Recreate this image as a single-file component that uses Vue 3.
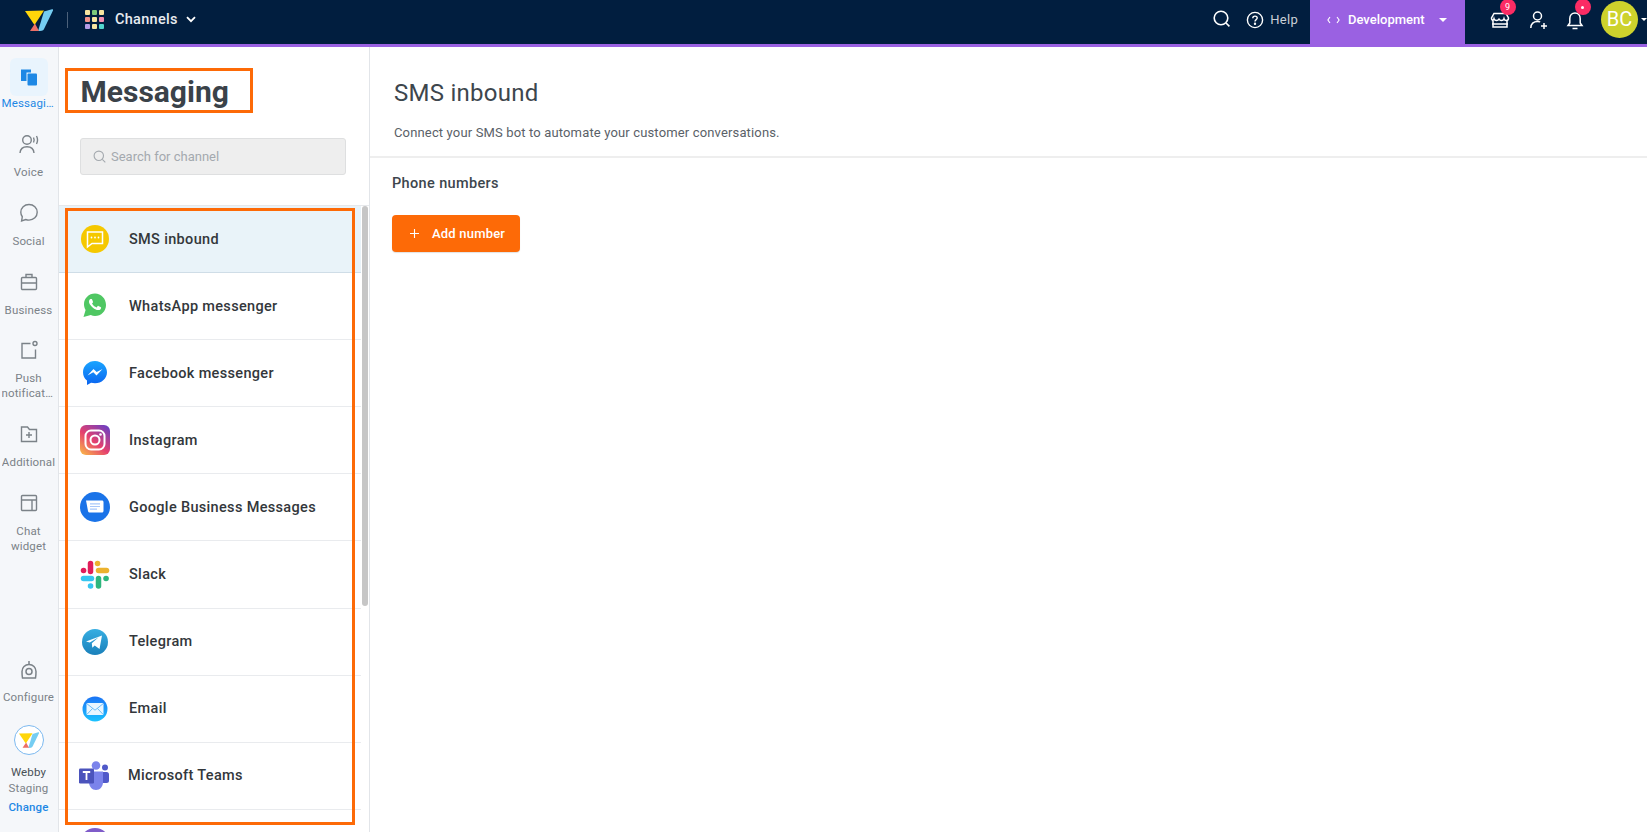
<script setup>
const railTop = [
  { key: 'voice', lines: ['Voice'] },
  { key: 'social', lines: ['Social'] },
  { key: 'business', lines: ['Business'] },
  { key: 'push', lines: ['Push', 'notifications'] },
  { key: 'additional', lines: ['Additional'] },
  { key: 'chat', lines: ['Chat', 'widget'] }
]
const channels = [
  { key: 'sms', name: 'SMS inbound', active: true },
  { key: 'whatsapp', name: 'WhatsApp messenger' },
  { key: 'facebook', name: 'Facebook messenger' },
  { key: 'instagram', name: 'Instagram' },
  { key: 'google', name: 'Google Business Messages' },
  { key: 'slack', name: 'Slack' },
  { key: 'telegram', name: 'Telegram' },
  { key: 'email', name: 'Email' },
  { key: 'teams', name: 'Microsoft Teams' },
  { key: 'more', name: '' }
]
const dots = ['#f8e6a0', '#7cc97a', '#f8e6a0', '#f2928a', '#f8e6a0', '#f48fb1', '#b49be6', '#f8e6a0', '#52d6cf']
</script>

<template>
  <div class="app">
    <header class="topbar">
      <div class="top-left">
        <svg class="logo" viewBox="25 8 28 22" width="28" height="22">
          <polygon points="25,10 44,9.5 34.5,24" fill="#ffd60a" />
          <path d="M44 10.5 52 8.3c.8-.2 1.3.4 1 1.1L44 28c-.5 1-1.2 1.6-2.3 1.8l-3.7.4z" fill="#75cdf2" />
          <polygon points="30,30 35,22.5 39,30" fill="#ec6f66" />
        </svg>
        <span class="divider"></span>
        <div class="apps"><i v-for="(c, i) in dots" :key="i" :style="{ background: c }"></i></div>
        <span class="channels">Channels</span>
        <svg class="chev" width="10" height="7" viewBox="0 0 10 7"><path d="M1 1.2 5 5.2l4-4" fill="none" stroke="#fff" stroke-width="1.8" /></svg>
      </div>
      <div class="top-right">
        <svg class="ic-search" width="20" height="20" viewBox="0 0 20 20" fill="none" stroke="#fff" stroke-width="1.6"><circle cx="9" cy="9" r="6.8" /><path d="m14 14 3.4 3.4" /></svg>
        <svg class="ic-help" width="18" height="18" viewBox="0 0 18 18" fill="none" stroke="#fff" stroke-width="1.4"><circle cx="9" cy="9" r="7.6" /><path d="M6.8 7.2c0-1.3 1-2.1 2.2-2.1s2.2.8 2.2 2c0 1.5-2.2 1.6-2.2 3.3" /><circle cx="9" cy="12.8" r=".5" fill="#fff" /></svg>
        <span class="help">Help</span>
        <div class="env">
          <svg width="13" height="8" viewBox="0 0 13 8" fill="none" stroke="#fff" stroke-width="1.1"><path d="M3 1 .9 4 3 7M10 1l2.100 3L10 7" /></svg>
          <span>Development</span>
          <svg width="8" height="4" viewBox="0 0 8 4"><path d="M0 0h8L4 4z" fill="#fff" /></svg>
        </div>
        <div class="tool store">
          <svg width="20" height="20" viewBox="0 0 20 20" fill="none" stroke="#fff" stroke-width="1.5"><path d="M4 3.500h12l2.500 4.500c0 1.500-1 2.500-2.200 2.500-1.100 0-2-.8-2.300-1.800-.3 1-1.400 1.800-2.700 1.800-1 0-1.800-.6-2.300-1.400-.5.800-1.300 1.400-2.300 1.400-1.300 0-2.400-.8-2.700-1.800-.3 1-1.200 1.800-2.300 1.800C2.500 10.500 1.500 9.500 1.500 8z" /><path d="M3 10.500V17h14v-6.500M2 14h16" /></svg>
          <b class="badge">9</b>
        </div>
        <div class="tool adduser">
          <svg width="20" height="20" viewBox="0 0 20 20" fill="none" stroke="#fff" stroke-width="1.5"><circle cx="8.500" cy="6" r="4" /><path d="M1.800 18c0-4.200 2.800-6.500 6.700-6.500 1 0 1.900.1 2.700.4M15 13v6M12 16h6" /></svg>
        </div>
        <div class="tool bell">
          <svg width="20" height="20" viewBox="0 0 20 20" fill="none" stroke="#fff" stroke-width="1.5"><path d="M3 15.500h14l-1.800-2.500V8.500C15.200 5.300 13 3 10 3S4.800 5.300 4.800 8.500V13zM7.500 18.500h5" /></svg>
          <b class="badge dot"></b>
        </div>
        <div class="avatar">BC</div>
        <svg class="caret" width="6" height="3" viewBox="0 0 6 3"><path d="M0 0h6L3 3z" fill="#fff" /></svg>
      </div>
    </header>

    <div class="body">
      <nav class="rail">
        <div class="rail-item active">
          <div class="rail-icon">
            <svg width="18" height="18" viewBox="0 0 18 18"><path d="M1 1.500h10v3H6.500v8.500H1z" fill="#1e88e5" /><rect x="7.500" y="5.500" width="9.500" height="12" rx="1" fill="#1e88e5" /></svg>
          </div>
          <span class="rail-label">Messaging</span>
        </div>
        <div v-for="item in railTop" :key="item.key" class="rail-item">
          <div class="rail-icon">
            <svg width="22" height="22" viewBox="0 0 22 22" fill="none" stroke="#7b8288" stroke-width="1.4">
              <template v-if="item.key === 'voice'"><circle cx="9" cy="7" r="4.300" /><path d="M2 20c.3-4.300 3-6.300 7-6.300s6.700 2 7 6.300M15.500 4.500c.8 1.500.8 3.500 0 5M18.500 3c1.300 2.500 1.300 5.500 0 8" /></template>
              <template v-else-if="item.key === 'social'"><path d="M11 2.500c4.700 0 8.200 3.500 8.200 7.800s-3.500 7.800-8.200 7.800c-1.200 0-2.300-.2-3.300-.6L3.600 19l.7-4.200c-1-1.300-1.500-2.800-1.500-4.500 0-4.300 3.500-7.800 8.200-7.800z" /></template>
              <template v-else-if="item.key === 'business'"><rect x="3.500" y="6.500" width="15" height="12" rx="1" /><path d="M8 6.500V3.500h6v3M3.500 12h15M11 11.300v1.400" /></template>
              <template v-else-if="item.key === 'push'"><path d="M12.500 4.500H4V19h13.500v-8.500" /><circle cx="17" cy="4.500" r="2" /></template>
              <template v-else-if="item.key === 'additional'"><path d="M3.500 4h6l2 2.500h7V18.500h-15zM11 9v6M8 12h6" /></template>
              <template v-else><rect x="3.500" y="3.500" width="15" height="15" rx="1" /><path d="M3.500 8h15M14 8v10.500" /></template>
            </svg>
          </div>
          <span v-for="line in item.lines" :key="line" class="rail-label">{{ line }}</span>
        </div>
        <div class="rail-bottom">
          <div class="rail-item">
            <div class="rail-icon">
              <svg width="22" height="22" viewBox="0 0 22 22" fill="none" stroke="#7b8288" stroke-width="1.500"><path d="M4.500 19c-.5-2-.5-4-.5-6.500C4 8.500 7 5.500 11 5.500s7 3 7 7c0 2.500 0 4.500-.5 6.500z" /><circle cx="11" cy="12.500" r="3" /><path d="M11 2v3" /></svg>
            </div>
            <span class="rail-label">Configure</span>
          </div>
          <div class="workspace">
            <div class="ws-logo">
              <svg viewBox="25 8 28 22" width="20" height="16">
                <polygon points="25,10 44,9.500 34.500,24" fill="#ffd60a" />
                <path d="M44 10.500 52 8.300c.8-.2 1.300.4 1 1.100L44 28c-.5 1-1.200 1.600-2.300 1.800l-3.700.4z" fill="#75cdf2" />
                <polygon points="30,30 35,22.500 39,30" fill="#ec6f66" />
              </svg>
            </div>
            <span class="ws-name">Webby</span>
            <span class="ws-env">Staging</span>
            <span class="ws-change">Change</span>
          </div>
        </div>
      </nav>

      <aside class="panel">
        <h1 class="panel-title">Messaging</h1>
        <div class="search">
          <svg width="13" height="13" viewBox="0 0 13 13" fill="none" stroke="#a4a9ae" stroke-width="1.100"><circle cx="5.800" cy="5.800" r="4.700" /><path d="m9.300 9.300 3 3" /></svg>
          <span>Search for channel</span>
        </div>
        <div class="list-wrap">
          <ul class="list">
            <li v-for="c in channels" :key="c.key" class="row" :class="{ selected: c.active, teams: c.key === 'teams' }">
              <svg class="row-icon" width="30" height="30" viewBox="0 0 30 30">
                <defs>
                  <linearGradient id="ig" x1="0.100" y1="1" x2="0.900" y2="0">
                    <stop offset="0" stop-color="#f9b34a" /><stop offset=".45" stop-color="#e5406e" /><stop offset="1" stop-color="#6a3fc4" />
                  </linearGradient>
                  <linearGradient id="fb" x1="0.500" y1="0" x2="0.500" y2="1"><stop offset="0" stop-color="#1aa5ff" /><stop offset="1" stop-color="#0a64f0" /></linearGradient>
                  <linearGradient id="tg" x1="0.500" y1="0" x2="0.500" y2="1"><stop offset="0" stop-color="#37aee2" /><stop offset="1" stop-color="#1a80ba" /></linearGradient>
                  <linearGradient id="em" x1="0.500" y1="0" x2="0.500" y2="1"><stop offset="0" stop-color="#1b73f5" /><stop offset="1" stop-color="#1bc3ff" /></linearGradient>
                </defs>
                <template v-if="c.key === 'sms'">
                  <circle cx="15" cy="15" r="14" fill="#f5c800" />
                  <path d="M7.500 8h15v11.500h-10.500l-4.500 3.500z" fill="none" stroke="#fff" stroke-width="1.500" />
                  <circle cx="11.500" cy="13.500" r=".9" fill="#fff" /><circle cx="15" cy="13.500" r=".9" fill="#fff" /><circle cx="18.500" cy="13.500" r=".9" fill="#fff" />
                </template>
                <template v-else-if="c.key === 'whatsapp'">
                  <path d="M15 2.500C8.800 2.500 4 7.300 4 13.300c0 2.100.6 4 1.600 5.700L3.500 26l7.300-2c1.300.6 2.700.9 4.200.9 6.200 0 11-4.900 11-11S21.200 2.500 15 2.500z" fill="#4fc763" />
                  <path transform="translate(3 1.500)" d="M17.472 14.382c-.297-.149-1.758-.867-2.030-.967-.273-.099-.471-.148-.67.150-.197.297-.767.966-.940 1.164-.173.199-.347.223-.644.075-.297-.150-1.255-.463-2.390-1.475-.883-.788-1.480-1.761-1.653-2.059-.173-.297-.018-.458.130-.606.134-.133.298-.347.446-.520.149-.174.198-.298.298-.497.099-.198.050-.371-.025-.520-.075-.149-.669-1.612-.916-2.207-.242-.579-.487-.500-.669-.510-.173-.008-.371-.010-.570-.010-.198 0-.520.074-.792.372-.272.297-1.040 1.016-1.040 2.479 0 1.462 1.065 2.875 1.213 3.074.149.198 2.096 3.200 5.077 4.487.709.306 1.262.489 1.694.625.712.227 1.360.195 1.871.118.571-.085 1.758-.719 2.006-1.413.248-.694.248-1.289.173-1.413-.074-.124-.272-.198-.570-.347z" fill="#fff" />
                </template>
                <template v-else-if="c.key === 'facebook'">
                  <path d="M15 3C8.300 3 3 7.900 3 14.200c0 3.400 1.500 6.300 4 8.300V27l4.100-2.300c1.200.3 2.600.5 3.900.5 6.700 0 12-4.900 12-11S21.700 3 15 3z" fill="url(#fb)" />
                  <path d="m7.500 17.500 6-6.500 3.200 3.100 5.800-3.100-6 6.500-3.200-3.200z" fill="#fff" />
                </template>
                <template v-else-if="c.key === 'instagram'">
                  <rect width="30" height="30" rx="6" fill="url(#ig)" />
                  <rect x="5.500" y="5.500" width="19" height="19" rx="5.500" fill="none" stroke="#fff" stroke-width="2" />
                  <circle cx="15" cy="15" r="4.500" fill="none" stroke="#fff" stroke-width="2" />
                  <circle cx="20.500" cy="9.500" r="1.300" fill="#fff" />
                </template>
                <template v-else-if="c.key === 'google'">
                  <circle cx="15" cy="15" r="15" fill="#1a73e8" />
                  <path d="M6 8.500h16c.8 0 1.500.7 1.500 1.500v9c0 .8-.7 1.500-1.500 1.500H10c-1 0-1.800-.5-2-1.500z" fill="#fff" />
                  <path d="M10 11.800h10M10 14.500h10M10 17.200h7" stroke="#a8c7fa" stroke-width="1.200" />
                </template>
                <template v-else-if="c.key === 'slack'">
                  <g fill="none" stroke-width="5.500" stroke-linecap="round">
                    <path d="M10.500 3.500v8" stroke="#e01e5a" /><path d="M3.500 10.500h.1" stroke="#e01e5a" />
                    <path d="M17.500 3.500h.1" stroke="#ecb22e" /><path d="M18.500 10.500h8" stroke="#ecb22e" />
                    <path d="M3.500 18.500h8" stroke="#36c5f0" /><path d="M10.500 26h.1" stroke="#36c5f0" />
                    <path d="M18.500 18.500v7.500" stroke="#2eb67d" /><path d="M26 18.500h.1" stroke="#2eb67d" />
                  </g>
                </template>
                <template v-else-if="c.key === 'telegram'">
                  <circle cx="15" cy="15" r="13" fill="url(#tg)" />
                  <path d="M6 14.500 22 8.500l-2.500 13.500-4.800-3.600-2.400 2.300-.5-4.400 6.800-6-8.800 5.200z" fill="#fff" />
                </template>
                <template v-else-if="c.key === 'email'">
                  <circle cx="15" cy="15" r="12.500" fill="url(#em)" />
                  <rect x="6.500" y="9" width="17" height="12" rx="1.200" fill="#e9f6ff" />
                  <path d="m7 9.800 8 6.400 8-6.400M7 20.300l5.500-5.800M23 20.300l-5.500-5.800" fill="none" stroke="#4aaef5" stroke-width=".8" />
                </template>
                <template v-else-if="c.key === 'teams'">
                  <circle cx="26" cy="6.500" r="3" fill="#5059c9" />
                  <rect x="22" y="11" width="8" height="11" rx="2.500" fill="#5059c9" />
                  <circle cx="17" cy="4.500" r="4.300" fill="#7b83eb" />
                  <path d="M10 10.500h14V21c0 4.500-3 8-7 8s-7-3.500-7-8z" fill="#7b83eb" />
                  <rect x="0" y="7.500" width="15" height="15" rx="1.300" fill="#4b53bc" />
                  <path d="M3.800 11h7.400M7.500 11v8" stroke="#fff" stroke-width="1.800" fill="none" />
                </template>
                <template v-else>
                  <circle cx="15" cy="15" r="15" fill="#7f5cc9" />
                </template>
              </svg>
              <span v-if="c.name">{{ c.name }}</span>
            </li>
          </ul>
          <div class="track"><div class="thumb"></div></div>
          <div class="highlight"></div>
        </div>
      </aside>

      <main class="main">
        <div class="main-head">
          <h2>SMS inbound</h2>
          <p>Connect your SMS bot to automate your customer conversations.</p>
        </div>
        <section class="numbers">
          <h3>Phone numbers</h3>
          <button class="add" type="button"><svg width="9" height="9" viewBox="0 0 9 9"><path d="M4.500 0v9M0 4.500h9" stroke="#fff" stroke-width="1.100" /></svg><span>Add number</span></button>
        </section>
      </main>
    </div>
  </div>
</template>

<style scoped>
.app { width: 1647px; height: 832px; overflow: hidden; display: flex; flex-direction: column; font-family: Roboto, "Liberation Sans", sans-serif; background: #fff; }
.topbar { flex: 0 0 47px; box-sizing: border-box; height: 47px; border-bottom: 3px solid #9a61e2; background: #011e3f; display: flex; justify-content: space-between; }
.top-left { display: flex; align-items: center; padding: 0 0 5px 25px; }
.logo { display: block; }
.divider { width: 1px; height: 16px; background: #4c617a; margin: 0 17px 0 14px; }
.apps { display: grid; grid-template-columns: repeat(3, 5px); grid-auto-rows: 5px; gap: 2px; margin-right: 11px; }
.apps i { display: block; border-radius: 1px; }
.channels { color: #e7ebf0; font-size: 14.5px; font-weight: 500; letter-spacing: .3px; margin-right: 8px; }
.top-right { display: flex; align-items: center; position: relative; padding-bottom: 5px; }
.ic-search { margin: -2px 0 0 0; }
.ic-help { margin-left: 14px; }
.help { color: #c9cfd6; font-size: 13px; letter-spacing: .3px; margin: 0 12px 0 6px; }
.env { align-self: flex-start; width: 155px; height: 44px; padding: 0 0 5px 17px; background: #9a61e2; display: flex; align-items: center; color: #fff; font-size: 13px; font-weight: 500; box-sizing: border-box; }
.env span { margin: 0 14px 0 8px; }
.tool { position: relative; width: 20px; height: 20px; }
.store { margin-left: 25px; }
.adduser { margin-left: 19px; }
.bell { margin-left: 16px; }
.badge { position: absolute; left: 9.5px; top: -10.5px; width: 16px; height: 16px; border-radius: 50%; background: #fb2c64; color: #fff; font-size: 9px; font-weight: 400; line-height: 16px; text-align: center; }
.badge.dot::after { content: ''; position: absolute; left: 6.5px; top: 6.5px; width: 3px; height: 3px; border-radius: 50%; background: #fff; }
.avatar { width: 37px; height: 37px; border-radius: 50%; background: #cdd22c; color: #fff; font-size: 20px; line-height: 37px; text-align: center; margin-left: 16px; }
.caret { margin: 0 0 0 3px; }

.body { flex: 1; min-height: 0; display: flex; }
.rail { flex: 0 0 59px; box-sizing: border-box; width: 59px; padding: 11px 1px 0 0; background: #f5f7fa; border-right: 1.5px solid #e2e5e9; display: flex; flex-direction: column; align-items: center; }
.rail-item { width: 100%; display: flex; flex-direction: column; align-items: center; margin-bottom: 13.8px; }
.rail-icon { width: 38px; height: 38px; border-radius: 6px; display: flex; align-items: center; justify-content: center; margin-bottom: 2px; }
.active .rail-icon { background: #e9f4fd; margin-bottom: 0; }
.rail-item.active { margin-bottom: 14px; }
.rail-label { display: block; width: 54px; box-sizing: border-box; color: #7b8288; font-size: 11.5px; line-height: 15px; letter-spacing: .15px; text-align: center; white-space: nowrap; overflow: hidden; text-overflow: ellipsis; }
.active .rail-label { color: #1e88e5; }
.rail-bottom { margin-top: auto; width: 100%; padding-bottom: 17px; }
.rail-bottom .rail-item { margin-bottom: 20px; }
.rail-bottom .rail-icon { margin-bottom: 1px; }
.workspace { display: flex; flex-direction: column; align-items: center; font-size: 11.5px; letter-spacing: .15px; line-height: 16px; }
.ws-logo { width: 30px; height: 30px; border-radius: 50%; border: 1px solid #7cb9f0; background: #fff; display: flex; align-items: center; justify-content: center; margin-bottom: 9px; box-sizing: border-box; }
.ws-name { color: #4a5157; }
.ws-env { color: #7b8288; }
.ws-change { color: #1e88e5; font-weight: 500; margin-top: 3px; }

.panel { flex: 0 0 311px; width: 311px; box-sizing: border-box; border-right: 1.5px solid #e2e5e9; display: flex; flex-direction: column; min-height: 0; }
.panel-title { box-sizing: border-box; width: 188px; height: 45px; margin: 21px 0 0 6px; padding: 2px 0 0 12.5px; border: 3px solid #fd6a07; color: #3a4249; font-size: 30px; font-weight: 700; line-height: 38px; }
.search { box-sizing: border-box; width: 266px; height: 37px; margin: 25px 0 30px 21px; background: #eeeeee; border: 1px solid #dedfe0; border-radius: 3px; display: flex; align-items: center; gap: 5px; padding-left: 12px; color: #a4a9ae; font-size: 13px; }
.list-wrap { position: relative; flex: 1; min-height: 0; display: flex; border-top: 1.5px solid #e6e8eb; overflow: hidden; }
.list { list-style: none; margin: 0; padding: 0; width: 302px; flex: none; }
.row { box-sizing: border-box; height: 67.1px; display: flex; align-items: center; gap: 19px; padding-left: 21px; border-bottom: 1.5px solid #e9ebee; color: #33373b; font-size: 14.5px; font-weight: 500; letter-spacing: .33px; }
.row.selected { background: #e9f3f9; border-bottom-color: #cfdde7; }
.row.teams { padding-left: 20px; gap: 19px; }
.row-icon { flex: none; display: block; }
.track { flex: 1; position: relative; }
.thumb { position: absolute; left: 1px; top: 0; width: 6px; height: 400px; border-radius: 3px; background: #c6c6c6; }
.highlight { position: absolute; left: 6px; top: 2px; width: 290px; height: 617px; box-sizing: border-box; border: 3px solid #fd6a07; pointer-events: none; }

.main { flex: 1; min-width: 0; }
.main-head { box-sizing: border-box; height: 111px; padding: 31px 0 0 24px; border-bottom: 2px solid #eeeeee; }
.main-head h2 { margin: 0; color: #3d464d; font-size: 24px; font-weight: 400; line-height: 30px; letter-spacing: .25px; }
.main-head p { margin: 16px 0 0; color: #5a6168; font-size: 13px; line-height: 18px; letter-spacing: .15px; }
.numbers { padding: 17px 0 0 22px; }
.numbers h3 { margin: 0; color: #3d464d; font-size: 14.5px; font-weight: 500; line-height: 18px; letter-spacing: .36px; }
.add { margin-top: 22px; width: 128px; height: 37px; border: 0; border-radius: 4px; background: #fd6a07; color: #fff; display: flex; align-items: center; padding: 0 0 0 18px; gap: 13px; font-family: inherit; font-size: 13px; font-weight: 500; letter-spacing: .2px; box-shadow: 0 1px 1px rgba(0,0,0,.12); }
</style>

<style>
html, body { margin: 0; background: #fff; }
</style>
